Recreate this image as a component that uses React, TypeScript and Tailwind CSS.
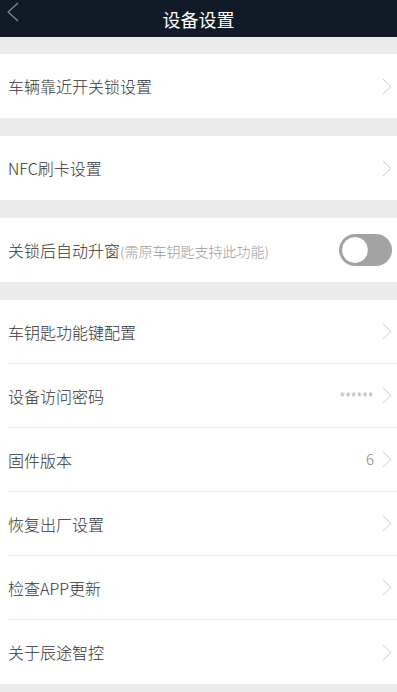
import React, { useState } from 'react';

const font = { fontFamily: '"Noto Sans CJK SC", "Noto Sans", sans-serif' };

const Chevron = () => (
  <svg width="10" height="17" viewBox="0 0 10 17" className="shrink-0">
    <path d="M1 1 L9 8.5 L1 16" fill="none" stroke="#cacaca" strokeWidth="1" />
  </svg>
);

interface RowProps {
  label: string;
  value?: React.ReactNode;
  divider?: boolean;
}

const Row: React.FC<RowProps> = ({ label, value, divider }) => (
  <div className="bg-white pl-2">
    <div
      className={`h-[64px] flex items-center justify-between pr-[5px] ${
        divider ? 'border-b border-[#ececec]' : ''
      }`}
    >
      <span className="text-[16px] font-light text-[#333333]">{label}</span>
      <div className="flex items-center gap-2">
        {value}
        <Chevron />
      </div>
    </div>
  </div>
);

const Gap = ({ h = 'h-[18px]' }: { h?: string }) => <div className={`${h} bg-[#ebebeb]`} />;

export default function App() {
  const [on, setOn] = useState(false);

  return (
    <div className="w-[397px] h-[692px] bg-[#ebebeb] overflow-hidden" style={font}>
      {/* Header */}
      <div className="h-[37px] bg-[#111a27] flex items-center relative">
        <svg width="14" height="20" viewBox="0 0 14 20" className="absolute left-[6px] top-[2px]">
          <path d="M12 1 L2 10 L12 19" fill="none" stroke="#8a8f98" strokeWidth="1.1" />
        </svg>
        <div className="w-full text-center text-white text-[18px] leading-none">设备设置</div>
      </div>

      <Gap h="h-[17px]" />
      <Row label="车辆靠近开关锁设置" />
      <Gap />
      <Row label="NFC刷卡设置" />
      <Gap />

      {/* Toggle row */}
      <div className="bg-white pl-2 pr-[5px] h-[64px] flex items-center justify-between">
        <div className="flex items-baseline">
          <span className="text-[16px] font-light text-[#333333]">关锁后自动升窗</span>
          <span className="text-[14px] font-light text-[#9a9a9a]">(需原车钥匙支持此功能)</span>
        </div>
        <button
          onClick={() => setOn(!on)}
          className={`w-[53px] h-[32px] rounded-full flex items-center px-[2px] ${
            on ? 'bg-[#4cd964] justify-end' : 'bg-[#a3a3a3] justify-start'
          }`}
        >
          <span className="w-[28px] h-[28px] rounded-full bg-white border border-[#9a9a9a]" />
        </button>
      </div>

      <Gap />
      <Row label="车钥匙功能键配置" divider />
      <Row
        label="设备访问密码"
        divider
        value={
          <span
            className="text-[12px] tracking-[1px] text-[#b0b0b0] mt-[2px]"
            style={{ fontFamily: '"Liberation Sans", sans-serif' }}
          >
            ******
          </span>
        }
      />
      <Row
        label="固件版本"
        divider
        value={<span className="text-[15px] font-light text-[#888888]">6</span>}
      />
      <Row label="恢复出厂设置" divider />
      <Row label="检查APP更新" divider />
      <Row label="关于辰途智控" />
    </div>
  );
}
